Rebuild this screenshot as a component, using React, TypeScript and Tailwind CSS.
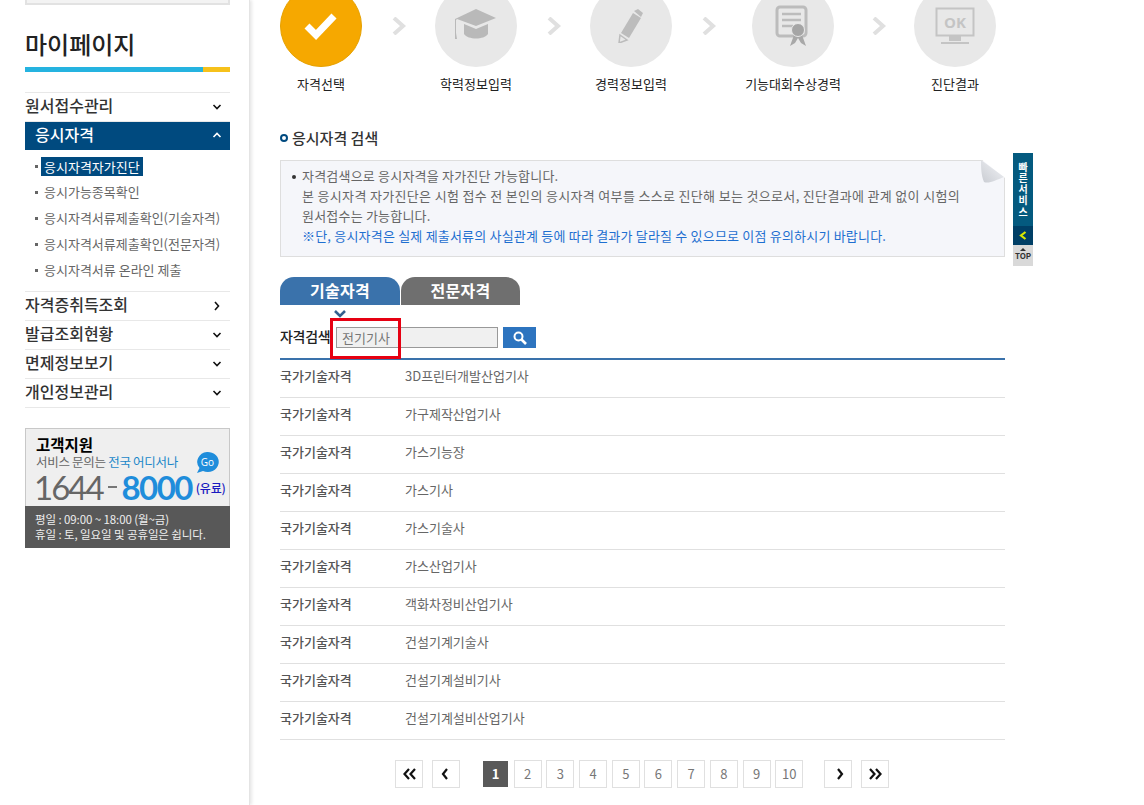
const font = { fontFamily: '"Noto Sans CJK KR", "Noto Sans", sans-serif' };

const rows = [
  "3D프린터개발산업기사",
  "가구제작산업기사",
  "가스기능장",
  "가스기사",
  "가스기술사",
  "가스산업기사",
  "객화차정비산업기사",
  "건설기계기술사",
  "건설기계설비기사",
  "건설기계설비산업기사",
];

const subMenu = ["응시가능종목확인", "응시자격서류제출확인(기술자격)", "응시자격서류제출확인(전문자격)", "응시자격서류 온라인 제출"];

function Chevron({ dir, color = "#111" }: { dir: "up" | "down" | "right"; color?: string }) {
  const d = dir === "up" ? "M1.5 6 L5 2.5 L8.5 6" : dir === "down" ? "M1.5 3 L5 6.5 L8.5 3" : "M3 1 L6.5 5 L3 9";
  return (
    <svg width="10" height="10" viewBox="0 0 10 10" fill="none" stroke={color} strokeWidth="1.6">
      <path d={d} />
    </svg>
  );
}

function MenuRow({ label, dir }: { label: string; dir: "down" | "right" }) {
  return (
    <div className="flex h-[29px] items-center justify-between border-b border-[#e8e8e8] pr-[8px] text-[16px] font-medium leading-none text-[#333]">
      <span className="pb-[4px]">{label}</span>
      <Chevron dir={dir} />
    </div>
  );
}

function Sidebar() {
  return (
    <aside className="w-[250px] shrink-0 border-r border-[#e4e4e4] pl-[25px] pr-[19px] shadow-[2px_0_3px_#e8e8e8]">
      <div className="h-[20px] -mt-[15px] border-2 border-[#e2e2e2] bg-[#f3f3f3]" />
      <h1 className="mt-[21px] text-[24px] font-medium leading-[36px] text-[#222]">마이페이지</h1>
      <div className="mt-[5px] flex h-[5px]">
        <div className="w-[178px] bg-[#25b3e0]" />
        <div className="flex-1 bg-[#f6c11b]" />
      </div>
      <nav className="mt-[20px] border-t border-[#e8e8e8]">
        <MenuRow label="원서접수관리" dir="down" />
        <div className="flex h-[28px] items-center justify-between bg-[#004a7f] pl-[10px] pr-[8px] text-[16px] font-medium leading-none text-white">
          <span className="pb-[5px]">응시자격</span>
          <Chevron dir="up" color="#fff" />
        </div>
        <ul className="border-b border-[#e8e8e8] pb-[11px] pt-[6px] text-[13px] leading-[26px] text-[#666]">
          <li className="flex h-[20px] items-center">
            <span className="ml-[10px] mr-[3px] h-[3px] w-[3px] bg-[#666]" />
            <span className="bg-[#004a7f] px-[3px] leading-[19px] text-white">응시자격자가진단</span>
          </li>
          {subMenu.map((s) => (
            <li key={s} className="mt-[6px] flex h-[20px] items-center whitespace-nowrap">
              <span className="ml-[10px] mr-[6px] h-[3px] w-[3px] bg-[#666]" />
              {s}
            </li>
          ))}
        </ul>
        <MenuRow label="자격증취득조회" dir="right" />
        <MenuRow label="발급조회현황" dir="down" />
        <MenuRow label="면제정보보기" dir="down" />
        <MenuRow label="개인정보관리" dir="down" />
      </nav>
      <section className="mt-[20px] border-t border-x border-[#c8c8c8] bg-[#efefef]">
        <div className="relative h-[77px] pl-[10px] pt-[6px]">
          <div className="text-[15.5px] font-bold leading-[19px] text-black">고객지원</div>
          <div className="text-[12.5px] leading-[15px] tracking-[-0.3px] text-[#666]">
            서비스 문의는 <span className="text-[#1a87c9]">전국 어디서나</span>
          </div>
          <div className="-ml-[2px] flex items-center whitespace-nowrap leading-[34px]">
            <span className="text-[33px] tracking-[-2px] text-[#666]" style={{ fontFamily: '"Lato", sans-serif' }}>1644</span>
            <span className="mx-[5px] h-[2px] w-[9px] bg-[#777]" />
            <span className="text-[33px] font-bold tracking-[-1.6px] text-[#1f8ddb]" style={{ fontFamily: '"Lato", sans-serif' }}>8000</span>
            <span className="ml-[4px] mt-[2px] text-[12px] font-medium tracking-[-0.2px] text-[#1a1ac0]">(유료)</span>
          </div>
          <svg className="absolute right-[10px] top-[22px]" width="24" height="23" viewBox="0 0 24 23">
            <path d="M12 1 A11 10 0 1 1 8 20 L2 22 L4.5 17 A11 10 0 0 1 12 1 Z" fill="#1f8ddb" />
            <text x="12.5" y="15" textAnchor="middle" fontSize="10" fill="#fff" fontFamily="Open Sans">Go</text>
          </svg>
        </div>
        <div className="-mx-px h-[42px] bg-[#585858] pl-[10px] pt-[6px] text-[11.5px] leading-[15px] tracking-[-0.1px] text-[#eee]">
          <div>평일 : 09:00 ~ 18:00 (월~금)</div>
          <div>휴일 : 토, 일요일 및 공휴일은 쉽니다.</div>
        </div>
      </section>
    </aside>
  );
}

function Arrow() {
  return (
    <svg width="16" height="18" viewBox="0 0 16 18" fill="none" stroke="#e0e0e0" strokeWidth="4">
      <path d="M2 1 L11 9 L2 17" />
    </svg>
  );
}

function StepIcon({ n }: { n: number }) {
  if (n === 0)
    return (
      <svg width="34" height="30" viewBox="0 0 34 30" fill="none" stroke="#fff" strokeWidth="7">
        <path d="M3 15 L12 24 L30 5" />
      </svg>
    );
  if (n === 1)
    return (
      <svg width="44" height="34" viewBox="0 0 44 34" fill="#b9b9b9">
        <path d="M22 0 L42 9 L22 17 L3 10 L2 11 L2 24 L3 30 L1 30 L1 24 L1 10 Z" />
        <path d="M10 15 L22 20 L34 15 L34 25 C30 31 14 31 10 25 Z" />
      </svg>
    );
  if (n === 2)
    return (
      <svg width="26" height="34" viewBox="0 0 26 34" fill="#bcbcbc">
        <path d="M16 2 L20 0 L25 4 L23 8 Z" />
        <path d="M15 4 L23 9 L11 29 L3 24 Z" />
        <path d="M2 26 L9 31 L1 34 Z" fill="none" stroke="#bcbcbc" strokeWidth="1.5" />
      </svg>
    );
  if (n === 3)
    return (
      <svg width="36" height="42" viewBox="0 0 36 42" fill="none">
        <rect x="2" y="2" width="29" height="29" rx="3" stroke="#bcbcbc" strokeWidth="3" />
        <path d="M7 9 H26 M7 15 H26 M7 21 H18" stroke="#bcbcbc" strokeWidth="2.5" />
        <path d="M19 30 L15 41 L20 38 L23 33 L26 38 L31 41 L27 30 Z" fill="#a8a8a8" />
        <circle cx="23" cy="25" r="6.5" fill="#a5a5a5" stroke="#e8e8e8" />
      </svg>
    );
  return (
    <svg width="40" height="38" viewBox="0 0 40 38" fill="none">
      <rect x="1.5" y="1.5" width="37" height="27" stroke="#c4c4c4" strokeWidth="2" />
      <text x="20" y="21" textAnchor="middle" fontSize="15" fontWeight="700" fill="#c4c4c4" fontFamily="Open Sans">OK</text>
      <rect x="14" y="29" width="12" height="5" fill="#c4c4c4" />
      <rect x="6" y="35" width="28" height="2" fill="#c4c4c4" />
    </svg>
  );
}

const steps = [
  { label: "자격선택", after: "ml-[30px] mr-[27px]" },
  { label: "학력정보입력", after: "ml-[30px] mr-[27px]" },
  { label: "경력정보입력", after: "ml-[30px] mr-[34px]" },
  { label: "기능대회수상경력", after: "ml-[38px] mr-[26px]" },
  { label: "진단결과", after: "" },
];

function Steps() {
  return (
    <div className="-mt-[15px] flex items-start">
      {steps.map((s, i) => (
        <div key={s.label} className="flex items-start">
          <div className="flex w-[82px] flex-col items-center">
            <div
              className={
                i === 0
                  ? "flex h-[82px] w-[82px] items-center justify-center rounded-full border border-[#e6a100] bg-[#f6a800]"
                  : "flex h-[82px] w-[82px] items-center justify-center rounded-full bg-[#e8e8e8]"
              }
            >
              <StepIcon n={i} />
            </div>
            <span className="mt-[7px] whitespace-nowrap text-[13px] leading-[19px] text-[#222]">{s.label}</span>
          </div>
          {s.after && (
            <div className={"mt-[32px] " + s.after}>
              <Arrow />
            </div>
          )}
        </div>
      ))}
    </div>
  );
}

function PageBtn({ children, active }: { children: React.ReactNode; active?: boolean }) {
  return active ? (
    <span className="flex h-[26px] w-[25px] items-center justify-center bg-[#595959] text-[13px] font-bold text-white">{children}</span>
  ) : (
    <span className="flex h-[28px] w-[28px] items-center justify-center border border-[#e0e0e0] text-[13px] text-[#777]">{children}</span>
  );
}

function DoubleChevron({ flip, single }: { flip?: boolean; single?: boolean }) {
  const d = single ? "M8 2 L4 7 L8 12" : "M7 2 L2.5 7 L7 12 M13 2 L8.5 7 L13 12";
  return (
    <svg width="15" height="14" viewBox="0 0 15 14" fill="none" stroke="#111" strokeWidth="2.2" className={flip ? "rotate-180" : ""}>
      <path d={d} />
    </svg>
  );
}

export default function App() {
  return (
    <div className="flex h-[805px] w-[1144px] overflow-hidden bg-white" style={font}>
      <Sidebar />
      <main className="relative ml-[30px] w-[725px]">
        <Steps />
        <h2 className="mt-[35px] flex items-center text-[15px] font-medium leading-[20px] text-[#333]">
          <span className="mr-[4px] h-[8px] w-[8px] rounded-full border-2 border-[#004a7f]" />
          응시자격 검색
        </h2>
        <div className="relative mt-[12px] h-[97px] border border-[#dedede] bg-[#f5f6fa] pl-[21px] pt-[5px] text-[13px] leading-[20px] tracking-[0.2px] text-[#666]">
          <span className="absolute left-[11px] top-[14px] h-[4px] w-[4px] rounded-full bg-[#333]" />
          <p>자격검색으로 응시자격을 자가진단 가능합니다.</p>
          <p className="tracking-[0.33px]">본 응시자격 자가진단은 시험 접수 전 본인의 응시자격 여부를 스스로 진단해 보는 것으로서, 진단결과에 관계 없이 시험의</p>
          <p>원서접수는 가능합니다.</p>
          <p className="text-[#1e6fd0]">※단, 응시자격은 실제 제출서류의 사실관계 등에 따라 결과가 달라질 수 있으므로 이점 유의하시기 바랍니다.</p>
          <svg className="absolute -right-px -top-px" width="24" height="24" viewBox="0 0 24 24">
            <defs>
              <linearGradient id="fold" x1="0" y1="1" x2="1" y2="0">
                <stop offset="0" stopColor="#c9ccd2" />
                <stop offset="1" stopColor="#f4f5f8" />
              </linearGradient>
            </defs>
            <path d="M0 -1 H24 V18 Z" fill="#fff" />
            <path d="M0 0 L23 17 C15 20 8 24 3 22 C0 15 0 6 0 0 Z" fill="url(#fold)" />
          </svg>
        </div>

        <div className="absolute left-[733px] top-[153px] w-[20px] text-center">
          <div className="flex h-[73px] items-center justify-center bg-[#045a7f] text-[10px] font-bold tracking-[1.2px] text-white">
            <span className="[writing-mode:vertical-rl]">빠른서비스</span>
          </div>
          <div className="flex h-[19px] items-center justify-center bg-[#003f66]">
            <svg width="8" height="9" viewBox="0 0 8 9" fill="none" stroke="#d8e800" strokeWidth="2.2">
              <path d="M6.5 1 L2 4.5 L6.5 8" />
            </svg>
          </div>
          <div className="flex h-[21px] flex-col items-center bg-[#d9d9d9] pt-[3px] text-[8px] font-bold leading-[10px] text-[#333]">
            <span className="h-0 w-0 border-x-[3px] border-b-[3px] border-x-transparent border-b-[#333]" />
            <span>TOP</span>
          </div>
        </div>

        <div className="mt-[20px] flex gap-[1px]">
          <div className="flex h-[28px] w-[120px] items-center justify-center rounded-t-[14px] bg-[#3a72ab] pb-[2px] text-[16px] font-bold tracking-[0.3px] text-white">기술자격</div>
          <div className="flex h-[28px] w-[119px] items-center justify-center rounded-t-[14px] bg-[#6f6f6f] pb-[2px] text-[16px] font-bold tracking-[0.3px] text-white">전문자격</div>
        </div>
        <svg className="ml-[54px] mt-[5px]" width="12" height="8" viewBox="0 0 12 8" fill="none" stroke="#34608f" strokeWidth="2.6">
          <path d="M1 1 L6 6 L11 1" />
        </svg>
        <div className="relative mt-[1px] flex h-[41px] items-start border-b-2 border-[#3a72ab] pt-[8px]">
          <span className="w-[56px] whitespace-nowrap text-[14px] font-medium leading-[19px] tracking-[-0.3px] text-[#222]">자격검색</span>
          <div className="flex h-[21px] w-[162px] items-center border border-[#999] bg-[#f0f0f0] pl-[5px] text-[13px] text-[#777]">전기기사</div>
          <div className="ml-[5px] flex h-[21px] w-[33px] items-center justify-center bg-[#2d74bf]">
            <svg width="14" height="14" viewBox="0 0 14 14" fill="none" stroke="#fff" strokeWidth="2">
              <circle cx="5.5" cy="5.5" r="4" />
              <path d="M8.5 8.5 L13 13" strokeWidth="2.6" />
            </svg>
          </div>
          <div className="absolute -top-[1px] left-[50px] h-[41px] w-[71px] border-[3px] border-[#e60012]" />
        </div>
        <ul>
          {rows.map((r) => (
            <li key={r} className="flex h-[38px] items-center border-b border-[#e0e0e0] pb-[5px] text-[13px]">
              <span className="w-[125px] font-medium text-[#555]">국가기술자격</span>
              <span className="text-[#666]">{r}</span>
            </li>
          ))}
        </ul>
        <div className="ml-[115px] mt-[20px] flex items-center">
          <PageBtn><DoubleChevron /></PageBtn>
          <span className="ml-[9px]"><PageBtn><DoubleChevron single /></PageBtn></span>
          <div className="ml-[23px] flex items-center gap-[4.7px]">
            <span className="mr-[1px]"><PageBtn active>1</PageBtn></span>
            {[2, 3, 4, 5, 6, 7, 8, 9, 10].map((n) => (
              <PageBtn key={n}>{n}</PageBtn>
            ))}
          </div>
          <span className="ml-[21px]"><PageBtn><DoubleChevron single flip /></PageBtn></span>
          <span className="ml-[9px]"><PageBtn><DoubleChevron flip /></PageBtn></span>
        </div>
      </main>
    </div>
  );
}
